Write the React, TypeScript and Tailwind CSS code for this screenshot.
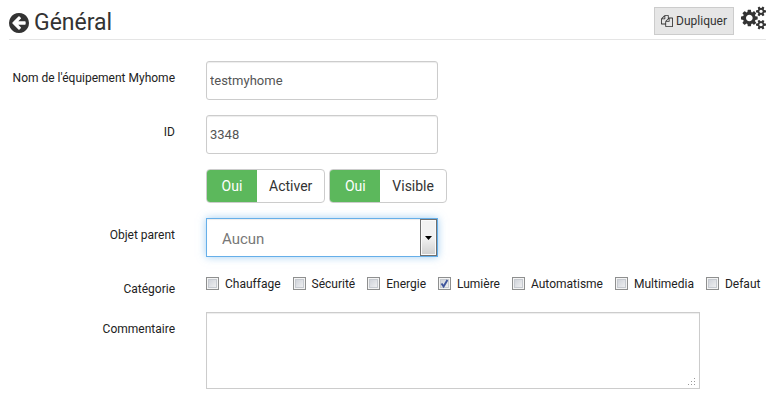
import { useState, type ReactNode } from "react";

const PATHS = {
  back: "M1408 960v-128q0-26-19-45t-45-19h-502l189-189q19-19 19-45t-19-45l-91-91q-18-18-45-18t-45 18l-362 362-91 91q-18 18-18 45t18 45l91 91 362 362q18 18 45 18t45-18l91-91q18-18 18-45t-18-45l-189-189h502q26 0 45-19t19-45zm256-64q0 209-103 385.5t-279.5 279.5-385.5 103-385.5-103-279.5-279.5-103-385.5 103-385.5 279.5-279.5 385.5-103 385.5 103 279.5 279.5 103 385.5z",
  copy: "M1696 384q40 0 68 28t28 68v1216q0 40-28 68t-68 28h-960q-40 0-68-28t-28-68v-288h-544q-40 0-68-28t-28-68v-672q0-40 20-88t48-76l408-408q28-28 76-48t88-20h416q40 0 68 28t28 68v328q68-40 128-40h416zm-544 213l-299 299h299v-299zm-640-384l-299 299h299v-299zm196 647l316-316v-416h-384v416q0 40-28 68t-68 28h-416v640h512v-256q0-40 20-88t48-76zm956 804v-1152h-384v416q0 40-28 68t-68 28h-416v640h896z",
  cogs: "M896 896q0-106-75-181t-181-75-181 75-75 181 75 181 181 75 181-75 75-181zm768 512q0-52-38-90t-90-38-90 38-38 90q0 53 37.5 90.5t90.5 37.5 90.5-37.5 37.5-90.5zm0-1024q0-52-38-90t-90-38-90 38-38 90q0 53 37.5 90.5t90.5 37.5 90.5-37.5 37.5-90.5zm-384 421v185q0 10-7 19.5t-16 10.5l-155 24q-11 35-32 76 34 48 90 115 7 11 7 20 0 12-7 19-23 30-82.5 89.5t-78.5 59.5q-11 0-21-7l-115-90q-37 19-77 31-11 108-23 155-7 24-30 24h-186q-11 0-20-7.5t-10-17.5l-23-153q-34-10-75-31l-118 89q-7 7-20 7-11 0-21-8-144-133-144-160 0-9 7-19 10-14 41-53t47-61q-23-44-35-82l-152-24q-10-1-17-9.5t-7-19.5v-185q0-10 7-19.5t16-10.5l155-24q11-35 32-76-34-48-90-115-7-11-7-20 0-12 7-20 22-30 82-89t79-59q11 0 21 7l115 90q34-18 77-32 11-108 23-154 7-24 30-24h186q11 0 20 7.5t10 17.5l23 153q34 10 75 31l118-89q8-7 20-7 11 0 21 8 144 133 144 160 0 8-7 19-12 16-42 54t-45 60q23 48 34 82l152 23q10 2 17 10.5t7 19.5zm640 533v140q0 16-149 31-12 27-30 52 51 113 51 138 0 4-4 7-122 71-124 71-8 0-46-47t-52-68q-20 2-30 2t-30-2q-14 21-52 68t-46 47q-2 0-124-71-4-3-4-7 0-25 51-138-18-25-30-52-149-15-149-31v-140q0-16 149-31 13-29 30-52-51-113-51-138 0-4 4-7 4-2 35-20t59-34 30-16q8 0 46 46.5t52 67.5q20-2 30-2t30 2q51-71 92-112l6-2q4 0 124 70 4 3 4 7 0 25-51 138 17 23 30 52 149 15 149 31zm0-1024v140q0 16-149 31-12 27-30 52 51 113 51 138 0 4-4 7-122 71-124 71-8 0-46-47t-52-68q-20 2-30 2t-30-2q-14 21-52 68t-46 47q-2 0-124-71-4-3-4-7 0-25 51-138-18-25-30-52-149-15-149-31v-140q0-16 149-31 13-29 30-52-51-113-51-138 0-4 4-7 4-2 35-20t59-34 30-16q8 0 46 46.5t52 67.5q20-2 30-2t30 2q51-71 92-112l6-2q4 0 124 70 4 3 4 7 0 25-51 138 17 23 30 52 149 15 149 31z",
};

const FIELD =
  "block border border-[#ccc] bg-white shadow-[inset_0_1px_1px_rgba(0,0,0,0.075)] outline-none";

function Row({ label, id, children }: { label?: string; id?: string; children: ReactNode }) {
  return (
    <div className="grid grid-cols-[166px_1fr] items-start gap-x-[31px]">
      {label ? (
        <label htmlFor={id} className="pt-[9px] text-right text-xs leading-4 whitespace-nowrap">
          {label}
        </label>
      ) : (
        <span />
      )}
      <div>{children}</div>
    </div>
  );
}

function Toggle({ label }: { label: string }) {
  const [on, setOn] = useState(true);
  return (
    <button
      type="button"
      role="switch"
      aria-checked={on}
      onClick={() => setOn(!on)}
      className="flex h-[34px] items-stretch overflow-hidden rounded-[4px] border border-[#ccc] bg-white text-sm leading-8 text-[#333]"
    >
      <span className={on ? "w-[50px] bg-[#5cb85c] text-white" : "w-[50px] bg-[#d9534f] text-white"}>
        {on ? "Oui" : "Non"}
      </span>
      <span className="px-3">{label}</span>
    </button>
  );
}

function Category({ name, initial }: { name: string; initial: boolean }) {
  const [checked, setChecked] = useState(initial);
  return (
    <label className="flex items-start gap-[6px]">
      <span className="relative mt-px block size-[13px]">
        <input
          type="checkbox"
          checked={checked}
          onChange={() => setChecked(!checked)}
          className="block size-[13px] appearance-none border border-[#8e8f8f] bg-linear-to-br from-[#c8ccd4] to-[#f6f6f6] shadow-[inset_0_0_0_1px_#f4f4f4,inset_0_0_0_2px_#c6cad0]"
        />
        {checked && (
          <svg viewBox="0 0 13 13" className="pointer-events-none absolute inset-0 size-[13px]" aria-hidden="true">
            <path d="M3.5 6.5 5.6 9.4 9.4 3" fill="none" stroke="#3f559c" strokeWidth="1.9" />
          </svg>
        )}
      </span>
      {name}
    </label>
  );
}

const CATEGORIES = ["Chauffage", "Sécurité", "Energie", "Lumière", "Automatisme", "Multimedia", "Defaut"];

export default function App() {
  return (
    <main className="bg-white pr-[17px] pb-3 pl-[9px] font-['Roboto',sans-serif] text-[#222]">
      <header className="flex h-10 items-start justify-between border-b border-[#e5e5e5] pt-[6px] text-[#333]">
        <h1 className="flex items-center gap-[5px] text-[23px] leading-[34px]">
          <button type="button" aria-label="Retour">
            <svg viewBox="128 128 1536 1536" className="size-5" fill="currentColor">
              <path d={PATHS.back} />
            </svg>
          </button>
          Général
        </h1>
        <div className="flex items-start gap-[7px]">
          <button
            type="button"
            className="mt-px flex h-7 items-center gap-[3px] border border-[#ccc] bg-[#e6e6e6] px-[6px] text-xs"
          >
            <svg viewBox="0 0 1792 1792" className="size-3" fill="currentColor" aria-hidden="true">
              <path d={PATHS.copy} />
            </svg>
            Dupliquer
          </button>
          <button type="button" aria-label="Configuration">
            <svg viewBox="0 0 1920 1792" className="h-6 w-[25px]" fill="currentColor">
              <path d={PATHS.cogs} />
            </svg>
          </button>
        </div>
      </header>

      <form className="flex flex-col gap-[15px] pt-[21px]">
        <Row label="Nom de l'équipement Myhome" id="name">
          <input
            id="name"
            type="text"
            defaultValue="testmyhome"
            className={`${FIELD} h-[39px] w-[232px] rounded-[3px] px-[3px] text-[13px] text-[#555]`}
          />
        </Row>
        <Row label="ID" id="ident">
          <input
            id="ident"
            type="text"
            defaultValue="3348"
            className={`${FIELD} h-[39px] w-[232px] rounded-[3px] px-[3px] text-[13px] text-[#555]`}
          />
        </Row>
        <Row>
          <div className="flex gap-1">
            <Toggle label="Activer" />
            <Toggle label="Visible" />
          </div>
        </Row>
        <Row label="Objet parent" id="parent">
          <div className="relative w-[232px]">
            <select
              id="parent"
              className="block h-[39px] w-full appearance-none border border-[#66afe9] bg-white pt-[3px] pl-[15px] text-[15px] text-[#777] shadow-[inset_0_1px_1px_rgba(0,0,0,0.075),0_0_8px_rgba(102,175,233,0.6)] outline-none"
            >
              <option>Aucun</option>
            </select>
            <span className="pointer-events-none absolute inset-y-px right-px flex w-[17px] items-center justify-center border border-[#707070] bg-linear-to-b from-[#f2f2f2] from-50% to-[#cfcfcf] to-100% shadow-[inset_0_0_0_1px_#fafafa]">
              <svg viewBox="0 0 7 4" className="h-1 w-[7px]" aria-hidden="true">
                <path d="M0 0h7L3.5 4z" />
              </svg>
            </span>
          </div>
        </Row>
        <Row label="Catégorie">
          <div className="flex gap-3 pt-1 text-xs leading-4 whitespace-nowrap">
            {CATEGORIES.map((name) => (
              <Category key={name} name={name} initial={name === "Lumière"} />
            ))}
          </div>
        </Row>
        <Row label="Commentaire" id="comment">
          <div className="relative max-w-[494px]">
            <textarea id="comment" className={`${FIELD} h-[77px] w-full resize-none p-1 text-[13px] text-[#555]`} />
            <svg
              viewBox="0 0 8 8"
              className="pointer-events-none absolute right-1 bottom-[3px] size-2"
              fill="#999"
              shapeRendering="crispEdges"
              aria-hidden="true"
            >
              <path d="M6 0h1v1h-1zM3 3h1v1h-1zM6 3h1v1h-1zM0 6h1v1h-1zM3 6h1v1h-1zM6 6h1v1h-1z" />
            </svg>
          </div>
        </Row>
      </form>
    </main>
  );
}
